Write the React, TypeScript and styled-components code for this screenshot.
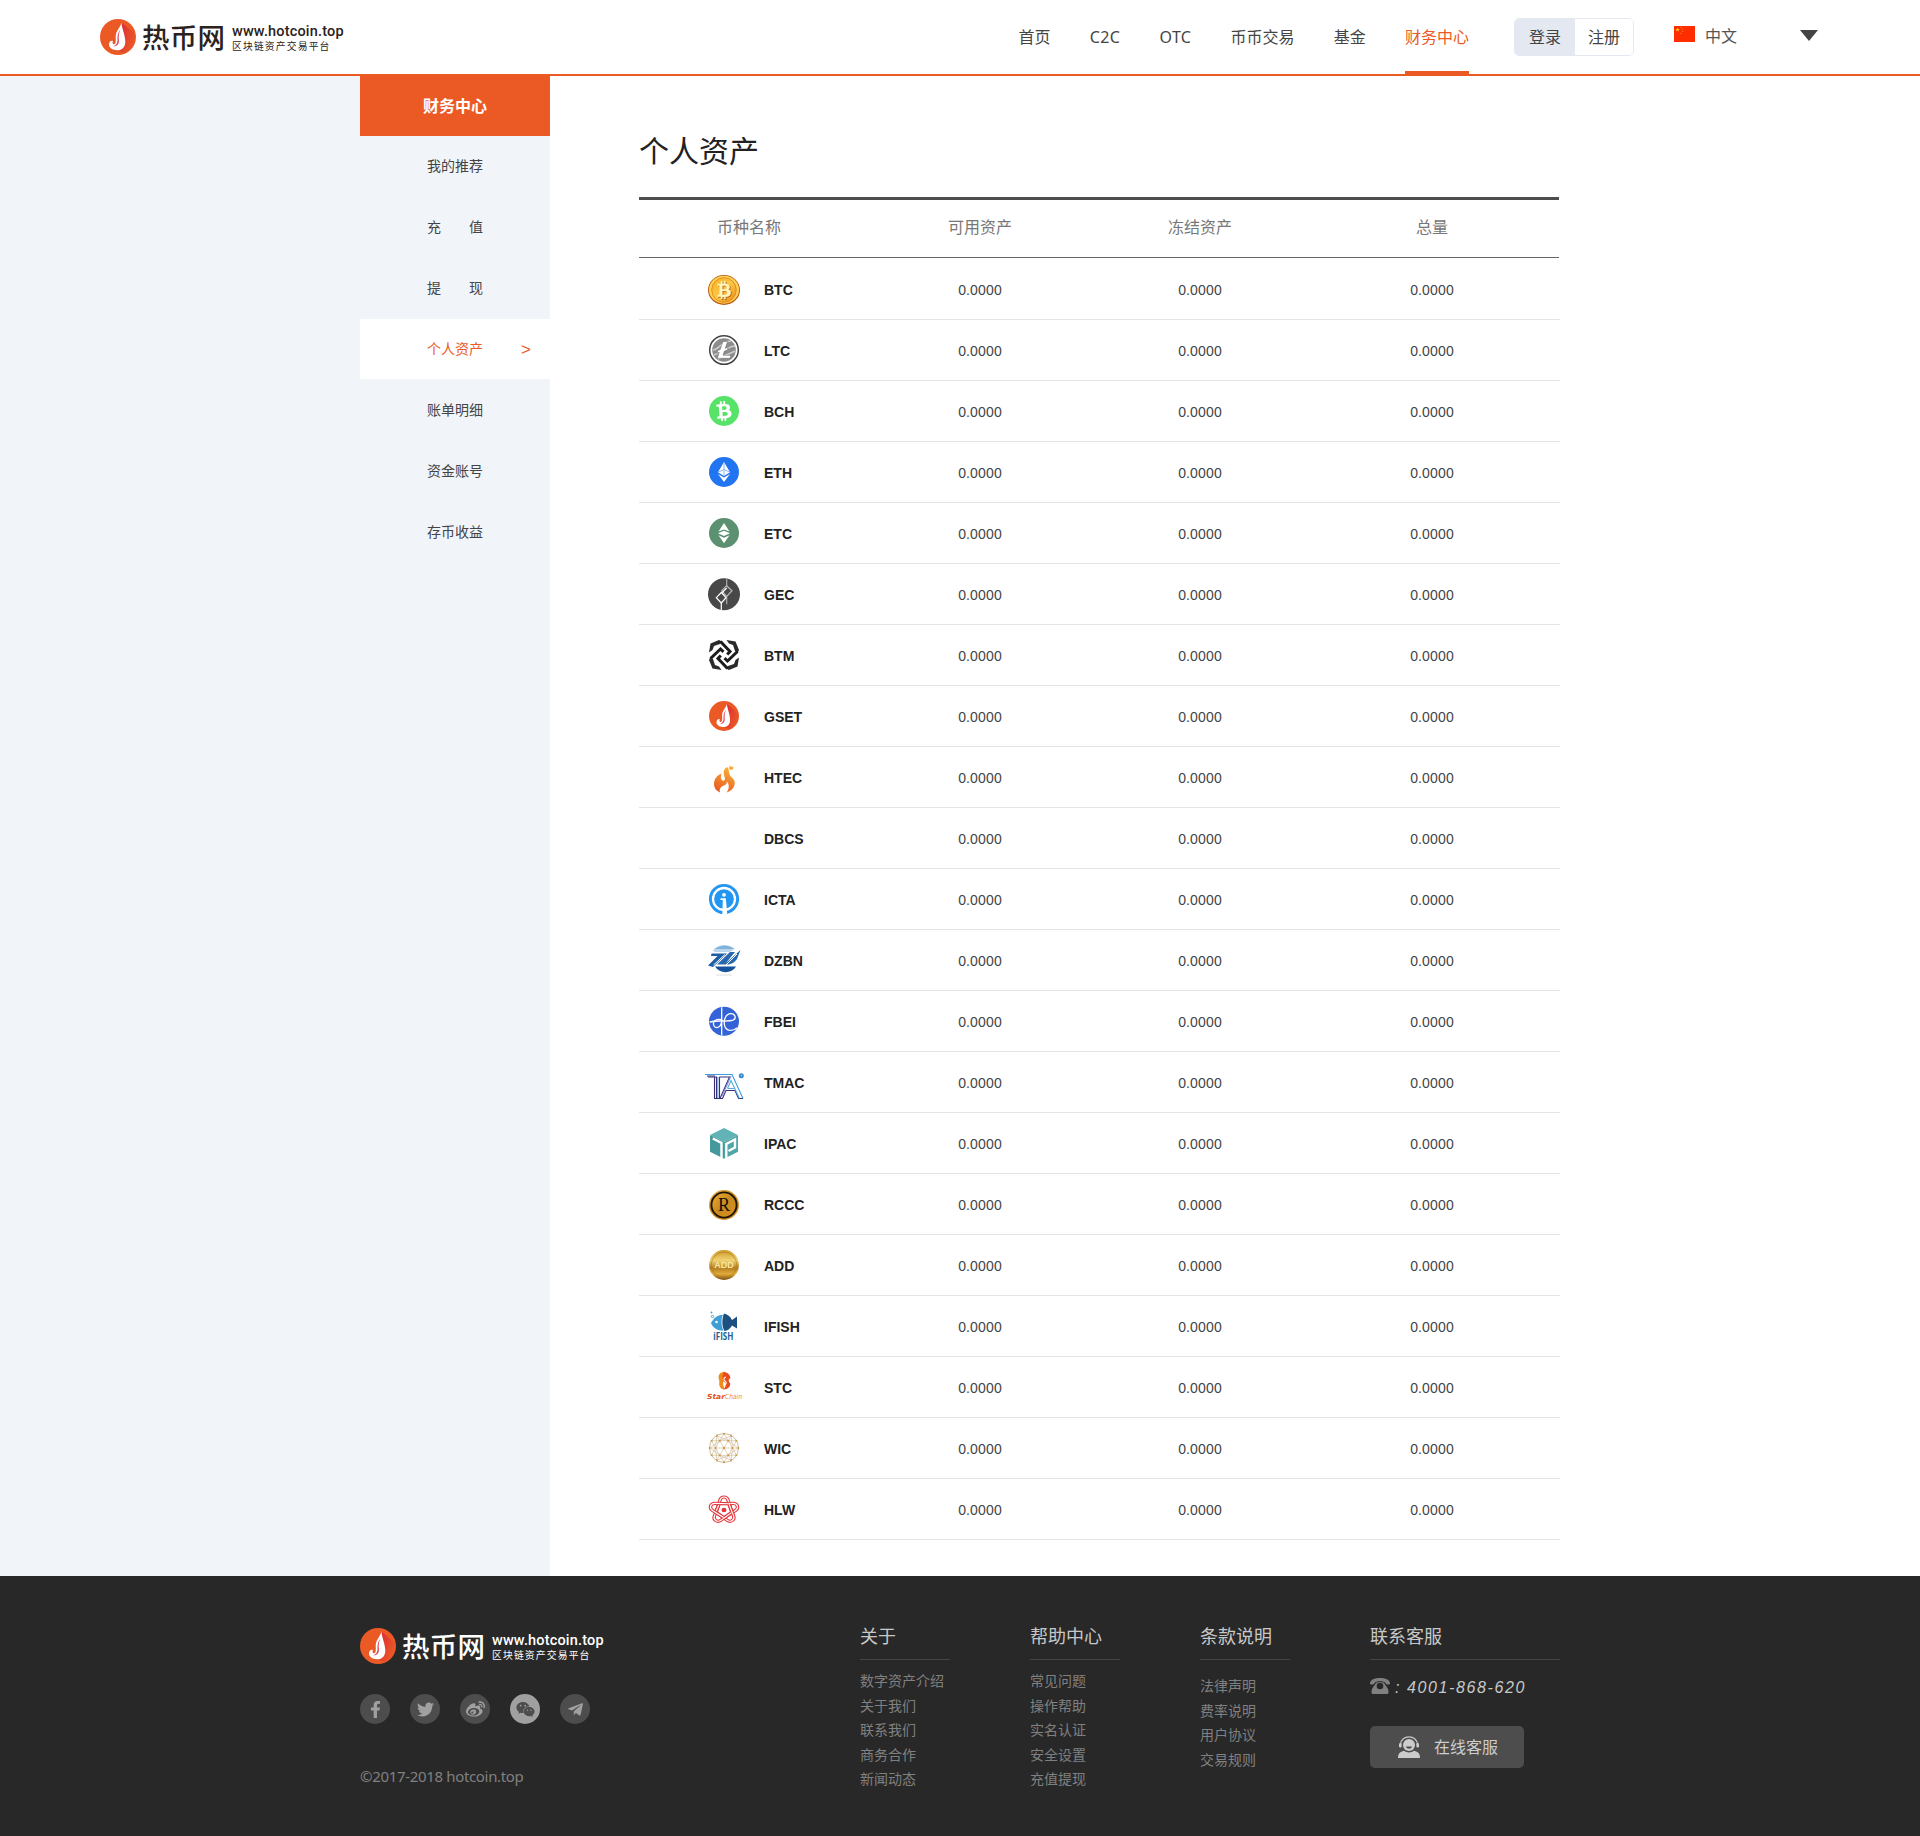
import React from 'react';
import styled, { createGlobalStyle } from 'styled-components';
import { FaBtc, FaFacebookF, FaTwitter, FaWeibo, FaWeixin, FaTelegramPlane } from 'react-icons/fa';

const cjk = '"Noto Sans", "Noto Sans CJK SC", sans-serif';
const arial = '"Liberation Sans", "Noto Sans CJK SC", sans-serif';
const orange = '#eb5a25';

const GlobalStyle = createGlobalStyle`
  * { box-sizing: border-box; }
  body { margin: 0; background: #fff; font-family: ${cjk}; color: #444; }
  ul { list-style: none; margin: 0; padding: 0; }
  a { color: inherit; text-decoration: none; }
  svg { display: block; flex: none; }
`;

const Page = styled.div`
  width: 1920px;
  height: 1836px;
  display: flex;
  flex-direction: column;
`;

/* ---------- header ---------- */

const Header = styled.header`
  height: 76px;
  flex: none;
  display: flex;
  align-items: center;
  padding: 0 102px 0 100px;
  border-bottom: 2px solid ${orange};
`;

const LogoBox = styled.a<{ $light?: boolean }>`
  display: flex;
  align-items: center;
  height: 36px;
  color: ${(p) => (p.$light ? '#fff' : '#2b2220')};
`;

const LogoName = styled.span`
  margin: -2px 0 0 6px;
  width: 84px;
  font: 500 27.5px/36px "Noto Sans CJK SC", sans-serif;
  letter-spacing: 0.3px;
  white-space: nowrap;
`;

const LogoSide = styled.span`
  display: flex;
  flex-direction: column;
  margin-left: 6px;
  padding-top: 3px;
`;

const LogoUrl = styled.span`
  font: 500 14.5px/15px Roboto, sans-serif;
  letter-spacing: 0.17px;
  white-space: nowrap;
`;

const LogoTag = styled.span`
  font: 400 9.8px/14px "Noto Sans CJK SC", sans-serif;
  letter-spacing: 1.15px;
  white-space: nowrap;
`;

const Nav = styled.nav`
  display: flex;
  gap: 39.2px;
  height: 74px;
  margin-left: auto;
`;

const NavLink = styled.a<{ $active?: boolean; $latin?: boolean }>`
  font-size: 16px;
  line-height: 74px;
  height: 74px;
  letter-spacing: ${(p) => (p.$latin ? '0.4px' : '0')};
  white-space: nowrap;
  color: ${(p) => (p.$active ? orange : '#444')};
  border-bottom: 3px solid ${(p) => (p.$active ? orange : 'transparent')};
`;

const AuthBox = styled.div`
  display: flex;
  width: 120px;
  height: 38px;
  margin-left: 45px;
  border: 1px solid #e4e9f1;
  border-radius: 5px;
  overflow: hidden;
`;

const AuthLink = styled.a<{ $filled?: boolean }>`
  width: ${(p) => (p.$filled ? '60px' : '58px')};
  text-align: center;
  font-size: 16px;
  line-height: 37px;
  background: ${(p) => (p.$filled ? '#e4e9f1' : '#fff')};
`;

const Language = styled.div`
  display: flex;
  align-items: center;
  margin-left: 40px;
  gap: 10px;
  font-size: 16px;
  line-height: 24px;
  color: #555;
`;

const Flag = styled.svg`
  margin-top: -6px;
`;

const LanguageName = styled.span`
  margin-top: -2px;
`;

const Caret = styled.span`
  width: 0;
  height: 0;
  margin: 0 0 3px 63px;
  border: 9px solid transparent;
  border-top: 11px solid #444;
  border-bottom: 0;
`;

/* ---------- body ---------- */

const Body = styled.div`
  height: 1500px;
  flex: none;
  display: flex;
`;

const Side = styled.aside`
  width: 550px;
  padding-left: 360px;
  background: #f1f5fa;
`;

const SideTitle = styled.h2`
  margin: 0;
  height: 60px;
  background: ${orange};
  color: #fff;
  text-align: center;
  font: 700 16px/61px ${cjk};
`;

const SideItem = styled.li<{ $active?: boolean }>`
  display: grid;
  grid-template-columns: 1fr auto 1fr;
  grid-template-rows: 60px;
  height: 60px;
  margin-bottom: 1px;
  font-size: 14px;
  line-height: 59px;
  white-space: pre;
  color: ${(p) => (p.$active ? orange : '#444')};
  background: ${(p) => (p.$active ? '#fff' : 'transparent')};
`;

const SideLabel = styled.a`
  grid-column: 2;
`;

const SideArrow = styled.span`
  justify-self: end;
  padding-right: 19px;
  font: 400 17px/61px ${arial};
`;

const Main = styled.main`
  padding: 49px 0 0 89px;
  width: 1010px;
`;

const Title = styled.h1`
  margin: 0;
  height: 72px;
  font: 400 30px/52px ${cjk};
  color: #222;
`;

const Columns = styled.div`
  display: grid;
  grid-template-columns: 220px 242px 198px 266px;
`;

const TableHead = styled(Columns)`
  width: 920px;
  height: 61px;
  border-top: 3px solid #4d4d4d;
  border-bottom: 1px solid #666;
  margin-bottom: 1px;
  font-size: 16px;
  line-height: 55px;
  text-align: center;
  color: #777;
`;

const Row = styled(Columns)`
  grid-template-rows: 60px;
  width: 921px;
  height: 61px;
  border-bottom: 1px solid #e4e4e4;
`;

const Coin = styled.div`
  display: flex;
  align-items: center;
  gap: 20px;
  padding-left: 65px;
`;

const CoinSlot = styled.svg`
  overflow: visible;
`;

const CoinName = styled.span`
  font: 700 14px/20px ${arial};
  padding-top: 2px;
  color: #222;
`;

const Amount = styled.span`
  font: 400 14px/62px ${arial};
  letter-spacing: 0.15px;
  text-align: center;
  color: #444;
`;

/* ---------- footer ---------- */

const Footer = styled.footer`
  height: 260px;
  flex: none;
  display: flex;
  padding: 0 360px;
  background: #282828;
  color: #808080;
`;

const Brand = styled.div`
  width: 500px;
  padding-top: 52px;
`;

const Socials = styled.div`
  display: flex;
  gap: 20px;
  margin-top: 30px;
`;

const Social = styled.a<{ $lit?: boolean }>`
  width: 30px;
  height: 30px;
  border-radius: 50%;
  display: flex;
  align-items: center;
  justify-content: center;
  font-size: 17px;
  background: ${(p) => (p.$lit ? '#a0a0a0' : '#4d4d4d')};
  color: ${(p) => (p.$lit ? '#4d4d4d' : '#a0a0a0')};
`;

const Copyright = styled.p`
  margin: 40px 0 0;
  font: 400 15px/24px ${cjk};
  letter-spacing: -0.33px;
`;

const LinkColumns = styled.div`
  display: flex;
  gap: 80px;
  padding-top: 46px;
`;

const LinkColumn = styled.section<{ $wide?: boolean }>`
  width: ${(p) => (p.$wide ? '190px' : '90px')};
`;

const ColumnTitle = styled.h3`
  margin: 0;
  height: 38px;
  border-bottom: 1px solid #444;
  font: 400 18px/28px ${cjk};
  color: #c8c8c8;
`;

const LinkList = styled.ul<{ $top: number }>`
  padding-top: ${(p) => p.$top}px;
  font-size: 14px;
  line-height: 24.5px;
  white-space: nowrap;
`;

const Phone = styled.div`
  display: flex;
  align-items: center;
  gap: 5px;
  margin-top: 14px;
  font: italic 400 16px/24px ${arial};
  letter-spacing: 1.6px;
  color: #c8c8c8;
  white-space: pre;
`;

const PhoneNumber = styled.span`
  padding-top: 2px;
  margin-bottom: -2px;
`;

const ServiceButton = styled.a`
  display: flex;
  align-items: center;
  gap: 14px;
  width: 154px;
  height: 42px;
  margin-top: 28px;
  padding-left: 28px;
  border-radius: 5px;
  background: #4d4d4d;
  color: #ccc;
  font-size: 16px;
  line-height: 40px;
`;

/* ---------- drawings ---------- */

const Flame = ({ id }: { id: string }) => (
  <g>
    <defs>
      <linearGradient id={id} x1="0" y1="0" x2="1" y2="0.6">
        <stop offset="0" stopColor="#d9203c" />
        <stop offset="1" stopColor="#eb5a25" />
      </linearGradient>
    </defs>
    <circle cx="18" cy="18" r="18" fill="#eb5a25" />
    <path d="M21.5 3.5 L35 15 A18 18 0 0 1 24 34 L17 31 L24 22Z" fill={`url(#${id})`} />
    <path
      d="M21.6 3.4C21.3 8.500 25.300 15.500 25.300 22.500C25.300 28.200 22 31.300 17.500 31.300C12 31.300 9 28.600 9 25.600C9 23 10.800 21.200 13 21.900C12.200 23.600 12.600 25.400 14 25.300C16 25.100 15.900 22 15.700 18C15.500 12 20 9 21.600 3.400Z"
      fill="#fff"
    />
    <path d="M20.800 10C18.400 14.500 18.600 17.500 18.900 21C19.200 25 17.200 27.600 13.300 27.300C16.500 26 17.700 24 17.500 20.500C17.200 16.500 18 13.500 20.800 10Z" fill="#e0405a" />
  </g>
);

const Logo = ({ light }: { light?: boolean }) => (
  <LogoBox $light={light}>
    <svg width="36" height="36" viewBox="0 0 36 36">
      <Flame id={light ? 'flame-footer' : 'flame-header'} />
    </svg>
    <LogoName>热币网</LogoName>
    <LogoSide>
      <LogoUrl>www.hotcoin.top</LogoUrl>
      <LogoTag>区块链资产交易平台</LogoTag>
    </LogoSide>
  </LogoBox>
);

const quarter = [0, 90, 180, 270];
const fifth = [0, 72, 144, 216, 288];

const wicPoints = (r: number, n: number, off = 0) =>
  Array.from({ length: n }, (_, i) => {
    const a = ((i + off) * 2 * Math.PI) / n;
    return [20 + r * Math.sin(a), 20 - r * Math.cos(a)];
  });
const wicOuter = wicPoints(14.3, 12);
const wicInner = wicPoints(8.5, 6, 0.5);

const art: Record<string, React.ReactNode> = {
  BTC: (
    <g transform="translate(0 1)">
      <defs>
        <linearGradient id="btc" x1="0" y1="0" x2="1" y2="1">
          <stop offset="0" stopColor="#f9b21f" />
          <stop offset="0.5" stopColor="#fbc64a" />
          <stop offset="1" stopColor="#e88a12" />
        </linearGradient>
      </defs>
      <ellipse cx="20" cy="20" rx="16" ry="15" fill="#b9590c" />
      <ellipse cx="20" cy="19.700" rx="15" ry="14" fill="#ffd257" />
      <circle cx="20" cy="20" r="12.300" fill="url(#btc)" stroke="#d98212" strokeWidth="0.8" />
      <g transform="translate(0.900 0.800)"><FaBtc x="10.800" y="10.800" size="18.500" color="#b9650e" /></g>
      <FaBtc x="10.800" y="10.800" size="18.500" color="#fff3b8" />
    </g>
  ),
  LTC: (
    <g>
      <circle cx="20" cy="20" r="14.300" fill="#fff" stroke="#444" strokeWidth="1.500" />
      <circle cx="20" cy="20" r="11.800" fill="#8c8c8c" />
      <path d="M9 20C15 20 16 12 27 11M10 25C16 23 22 17 31 16M14 29C20 25 26 24 31 21" fill="none" stroke="#ccc" strokeWidth="1.600" />
      <path d="M19 11.500h4.500l-2.300 7 3-1.200-.8 2.600-3 1.200-1.400 4.200h8l-1 3H13.300l2-6.100-2.300.9.800-2.600 2.400-1z" fill="#fff" stroke="#666" strokeWidth="0.5" />
    </g>
  ),
  BCH: (
    <g>
      <circle cx="20" cy="20" r="15" fill="#57e268" />
      <g transform="rotate(-4 20 20)"><FaBtc x="10" y="10" size="20" color="#fff" /></g>
    </g>
  ),
  ETH: (
    <g>
      <circle cx="20" cy="20" r="15" fill="#2275f0" />
      <path d="M20 10L26 20.300L20 24L14 20.300Z" fill="#fff" />
      <path d="M14 22L20 25.600L26 22L20 30Z" fill="#fff" />
      <path d="M20 10V24M14.500 20L20 17.500L25.500 20" stroke="#7fb0f8" strokeWidth="0.9" fill="none" />
    </g>
  ),
  ETC: (
    <g>
      <circle cx="20" cy="20" r="15" fill="#5b9070" />
      <path d="M20 10L25.500 18.500L20 16.500L14.500 18.500Z" fill="#fff" />
      <path d="M14 20.300L20 17.800L26 20.300L20 23Z" fill="#fff" />
      <path d="M14.500 22.300L20 24.700L25.500 22.300L20 30.300Z" fill="#fff" />
    </g>
  ),
  GEC: (
    <g fill="none" stroke="#e6e6e6" strokeWidth="1.200">
      <circle cx="20" cy="20.300" r="16" fill="#484848" stroke="none" />
      <path d="M22.700 4.500V11.700M22.700 22.300V30.300" stroke="#aaa" />
      <path d="M22.700 11.700L28 16.700L22.700 22.300L17.700 16.700Z" stroke="#bbb" />
      <path d="M17.300 18.500L22 23.700L17.300 29L12.300 23.700Z" stroke="#fff" />
      <path d="M17.300 29V36M17.700 19L22.700 14" stroke="#fff" />
    </g>
  ),
  BTM: (
    <g fill="none" stroke="#1c1c1c">
      {quarter.map((a) => (
        <g key={a} transform={`rotate(${a} 20 20)`}>
          <path d="M5 17.500L6.500 8.500L15 5L18 6.500L16 9L10 11L8.500 15Z" fill="#2a2a2a" stroke="none" />
          <path d="M6.500 23.500L16.500 14L19.500 16.800" strokeWidth="3" />
        </g>
      ))}
    </g>
  ),
  GSET: (
    <g transform="translate(5 5) scale(0.8333)">
      <Flame id="flame-gset" />
    </g>
  ),
  HTEC: (
    <g>
      <defs>
        <linearGradient id="htec" x1="0.700" y1="0" x2="0.300" y2="1">
          <stop offset="0" stopColor="#f9b13c" />
          <stop offset="1" stopColor="#e85a20" />
        </linearGradient>
      </defs>
      <path d="M23 10C17.500 13 20.500 18.500 21 21.500C21 24 18.500 24.500 17.500 22.500C16.500 20.500 17 18 17.500 16.500C13 18 10 22.500 10 27C10 31 12.500 34 16 35.500C15 31.500 17 29.500 20 28.500C22.500 27.500 23 26 22.800 24.500C25.500 27 25.500 32 22.500 35.500C28 34 31 29.500 30.800 25.500C30.500 21.500 26.500 20.500 25.500 17C24.500 14 25.500 12 23 10Z" fill="url(#htec)" />
      <path d="M26 8.500L27.500 10L29.500 9.500L29 12.300L26.500 13L25 11.500Z" fill="#f5a83c" />
    </g>
  ),
  DBCS: null,
  ICTA: (
    <g>
      <circle cx="20" cy="20" r="13.600" fill="none" stroke="#2196f3" strokeWidth="2.900" />
      <circle cx="20" cy="20" r="9.800" fill="#2196f3" />
      <circle cx="20" cy="15.800" r="1.900" fill="#fff" />
      <path d="M16.500 19.300H21.800L23.300 36H18.300L18.800 21H16.500Z" fill="#fff" />
    </g>
  ),
  DZBN: (
    <g>
      <path d="M9 10A15 14 0 0 1 31 9L33 7.500L26 12H10.500Z" fill="#b9d6ec" />
      <path d="M11 9A15 14 0 0 1 30 9Z" fill="#7fb2da" />
      <path d="M7.500 13.500H23L9 27L4 25.500L13.500 16H7Z" fill="#1d5fa8" />
      <path d="M26 12H31L21.500 23.500L36.500 10L33 19C31 22 28 24 24.500 24.500H13L26 12Z" fill="#2667ad" />
      <path d="M11 26.500H32C28 33.500 16 34.500 11 26.500Z" fill="#17529c" />
      <path d="M12 35H28" stroke="#ddd" />
      <path d="M9.500 25L21 14.500M22 25L33 14" stroke="#fff" strokeWidth="1" />
    </g>
  ),
  FBEI: (
    <g transform="translate(0 0.700)">
      <ellipse cx="20" cy="19.600" rx="15" ry="14.500" fill="#3463d8" />
      <g fill="none" stroke="#fff" strokeWidth="1.300">
        <path d="M17.700 5.500V33.500" />
        <path d="M5.500 20.500C12 18 24 20.500 29 18.500C33 16.500 31 12 27 12C21 12 19 20 21 25C23 29.500 29 30 33 26" />
        <path d="M17.700 18C12 16.500 8 20 10 24C12 27.500 17.700 26 17.700 18" />
      </g>
    </g>
  ),
  TMAC: (
    <g fill="none" strokeWidth="1.100">
      <path d="M1 12.500H28L39 36.500" stroke="#3b9fe0" />
      <path d="M4 15H12.500V36.500M15.500 15V36.500H12" stroke="#3a2f78" />
      <path d="M3 14H11M10.500 15V36.500H12M15.500 15H25.500L16 36.500H18.500L22 28.500H31L34.500 36.500H39" stroke="#3a2f78" />
      <path d="M23.500 26.500L27 18.500L35.500 36.500M13.800 15V36M24 26.500H30" stroke="#55a9dd" />
      <path d="M18 34L27 14" stroke="#7a8fd0" />
      <circle cx="37.300" cy="13.700" r="2.500" fill="#2f86c8" stroke="none" />
      <path d="M36.300 13.300H38.300M37.300 12.500V15" stroke="#bfe0f5" strokeWidth="0.5" />
    </g>
  ),
  IPAC: (
    <g>
      <path d="M20 5L34 12L20 19L6 12Z" fill="#62b3b5" />
      <path d="M6 12L20 19V35.700L6 28.700Z" fill="#45989c" />
      <path d="M34 12L20 19V35.700L34 28.700Z" fill="#4fa5a8" />
      <path d="M8.800 15.500L17.500 20V35M22.300 35.500V21L31 16.500V24.500L24.500 28" fill="none" stroke="#fff" strokeWidth="2.400" />
    </g>
  ),
  RCCC: (
    <g>
      <defs>
        <linearGradient id="rccc" x1="0" y1="0" x2="1" y2="1">
          <stop offset="0" stopColor="#f0b33a" />
          <stop offset="0.5" stopColor="#c98a1e" />
          <stop offset="1" stopColor="#d9921f" />
        </linearGradient>
      </defs>
      <circle cx="20" cy="21" r="15" fill="url(#rccc)" />
      <circle cx="20" cy="21" r="12.600" fill="none" stroke="#1d1408" strokeWidth="1.900" />
      <text x="20" y="27" textAnchor="middle" fontFamily="Liberation Serif, serif" fontSize="18" fill="#140d04">R</text>
    </g>
  ),
  ADD: (
    <g>
      <defs>
        <linearGradient id="add" x1="0" y1="0" x2="0" y2="1">
          <stop offset="0" stopColor="#cf9a26" />
          <stop offset="0.35" stopColor="#f0d273" />
          <stop offset="0.6" stopColor="#b57f22" />
          <stop offset="0.8" stopColor="#e2ab3a" />
          <stop offset="1" stopColor="#7e4b10" />
        </linearGradient>
      </defs>
      <circle cx="20" cy="20" r="15" fill="url(#add)" />
      <circle cx="20" cy="20" r="12.800" fill="none" stroke="#a87820" strokeWidth="0.600" />
      <text x="20" y="22.500" textAnchor="middle" fontFamily="Liberation Sans, sans-serif" fontWeight="700" fontSize="9" fill="#f8e7a4">ADD</text>
    </g>
  ),
  IFISH: (
    <g>
      <path d="M7 17C10 11 15 8.500 19 9C17 12 17 20 19.500 24.500C14 25 9 22 7 17Z" fill="#3d9fd6" />
      <path d="M20 7.500C23 8 26 10 28 14L33 10.500V22.500L28 19.500C26 23 23.500 24.500 20.500 25C17.500 20 18 12 20 7.500Z" fill="#1c5080" />
      <circle cx="12.500" cy="16" r="1.300" fill="#fff" />
      <circle cx="8.500" cy="10.500" r="1.200" fill="none" stroke="#3d9fd6" strokeWidth="0.900" />
      <circle cx="7.500" cy="6.500" r="0.900" fill="#3d9fd6" />
      <text x="9.300" y="34" fontFamily="Open Sans, sans-serif" fontWeight="700" fontSize="10" textLength="20" lengthAdjust="spacingAndGlyphs" fill="#1c6191">iFISH</text>
    </g>
  ),
  STC: (
    <g>
      <path d="M21 4.800C16 4.500 13.500 8.500 15 12.500C16 15.500 14.500 17 16 20C17.500 22.500 20 22.500 20 22.500C20.500 20 19 18 19 15.500L21 13C18.500 11.500 19.500 8 21 4.800Z" fill="#f08a18" />
      <path d="M20 5C24 5.500 26 8 26.500 11C24.500 12.500 24 13.500 26 16C27 19.500 24 22.500 19.500 22.500C22 19.500 22.500 17 20.500 15C18.500 13 17.500 9 20 5Z" fill="#e84a1a" />
      <path d="M22 10C18.500 11 20 13.500 21.500 14.500C23 16 22 17.500 19.500 18.500" fill="none" stroke="#fff" strokeWidth="1.100" />
      <text x="3" y="32.300" fontFamily="DejaVu Sans, sans-serif" fontStyle="italic" fontWeight="700" fontSize="7" textLength="18" lengthAdjust="spacingAndGlyphs" fill="#e2501c">Star</text>
      <text x="21" y="32.300" fontFamily="DejaVu Sans, sans-serif" fontStyle="italic" fontSize="7" textLength="17" lengthAdjust="spacingAndGlyphs" fill="#ec8a35">Chain</text>
    </g>
  ),
  WIC: (
    <g fill="none" stroke="#c2a97f" strokeWidth="0.500">
      <circle cx="20" cy="20" r="14.500" strokeWidth="0.800" />
      {wicOuter.map(([x, y], i) => (
        <g key={i}>
          {wicInner.map(([u, v], j) => (Math.hypot(x - u, y - v) < 13 ? <path key={j} d={`M${x} ${y}L${u} ${v}`} /> : null))}
          <circle cx={x} cy={y} r="1" fill="#cb9a4c" stroke="none" />
        </g>
      ))}
      {wicInner.map(([x, y], i) => (
        <g key={i}>
          <path d={`M20 20L${x} ${y}L${wicInner[(i + 1) % 6][0]} ${wicInner[(i + 1) % 6][1]}`} />
          <circle cx={x} cy={y} r="1" fill="#cb9a4c" stroke="none" />
        </g>
      ))}
      <circle cx="20" cy="20" r="1.200" fill="#cb9a4c" stroke="none" />
    </g>
  ),
  HLW: (
    <g fill="none" transform="translate(20 20.500) scale(1.08 1) translate(-20 -20)">
      {fifth.map((a) => (
        <g key={a} transform={`rotate(${a} 20 20.500)`}>
          <path d="M12.800 22.500L16.300 10.500C17.500 6.500 22.500 6.500 23.700 10.500L27.200 22.500" stroke="#e5383e" strokeWidth="3.200" />
          <path d="M12.800 22.500L16.300 10.500C17.500 6.500 22.500 6.500 23.700 10.500L27.200 22.500" stroke="#fff" strokeWidth="1.100" />
        </g>
      ))}
      <circle cx="20" cy="20.500" r="2.300" fill="#e5383e" />
    </g>
  ),
};

const coins = Object.keys(art);

const navItems = ['首页', 'C2C', 'OTC', '币币交易', '基金', '财务中心'];
const sideItems = ['我的推荐', '充　　值', '提　　现', '个人资产', '账单明细', '资金账号', '存币收益'];
const linkGroups = [
  { title: '关于', top: 9, links: ['数字资产介绍', '关于我们', '联系我们', '商务合作', '新闻动态'] },
  { title: '帮助中心', top: 9, links: ['常见问题', '操作帮助', '实名认证', '安全设置', '充值提现'] },
  { title: '条款说明', top: 14, links: ['法律声明', '费率说明', '用户协议', '交易规则'] },
];

export default function App() {
  return (
    <Page>
      <GlobalStyle />
      <Header>
        <Logo />
        <Nav>
          {navItems.map((t) => (
            <NavLink key={t} $active={t === '财务中心'} $latin={/^[A-Z]/.test(t)}>{t}</NavLink>
          ))}
        </Nav>
        <AuthBox>
          <AuthLink $filled>登录</AuthLink>
          <AuthLink>注册</AuthLink>
        </AuthBox>
        <Language>
          <Flag width="21" height="16" viewBox="0 0 21 16">
            <rect width="21" height="16" fill="#ff2d00" />
            <path d="M3.500 1.500L4.100 3L5.600 3L4.400 4L4.900 5.500L3.500 4.600L2.100 5.500L2.600 4L1.400 3L2.900 3Z" fill="#ffd400" />
            <path d="M6.500 1h1v1h-1zM8.200 2.800h1v1h-1zM8.200 5h1v1h-1zM6.200 7h1v1h-1z" fill="#e8941a" />
          </Flag>
          <LanguageName>中文</LanguageName>
        </Language>
        <Caret />
      </Header>

      <Body>
        <Side>
          <SideTitle>财务中心</SideTitle>
          <ul>
            {sideItems.map((t) => (
              <SideItem key={t} $active={t === '个人资产'}>
                <SideLabel>{t}</SideLabel>
                {t === '个人资产' && <SideArrow>&gt;</SideArrow>}
              </SideItem>
            ))}
          </ul>
        </Side>
        <Main>
          <Title>个人资产</Title>
          <TableHead>
            <span>币种名称</span>
            <span>可用资产</span>
            <span>冻结资产</span>
            <span>总量</span>
          </TableHead>
          {coins.map((name) => (
            <Row key={name}>
              <Coin>
                <CoinSlot width="40" height="40" viewBox="0 0 40 40">{art[name]}</CoinSlot>
                <CoinName>{name}</CoinName>
              </Coin>
              <Amount>0.0000</Amount>
              <Amount>0.0000</Amount>
              <Amount>0.0000</Amount>
            </Row>
          ))}
        </Main>
      </Body>

      <Footer>
        <Brand>
          <Logo light />
          <Socials>
            <Social><FaFacebookF /></Social>
            <Social><FaTwitter /></Social>
            <Social><FaWeibo size={19} /></Social>
            <Social $lit><FaWeixin size={19} /></Social>
            <Social><FaTelegramPlane /></Social>
          </Socials>
          <Copyright>©2017-2018 hotcoin.top</Copyright>
        </Brand>
        <LinkColumns>
          {linkGroups.map((g) => (
            <LinkColumn key={g.title}>
              <ColumnTitle>{g.title}</ColumnTitle>
              <LinkList $top={g.top}>
                {g.links.map((l) => (
                  <li key={l}><a>{l}</a></li>
                ))}
              </LinkList>
            </LinkColumn>
          ))}
          <LinkColumn $wide>
            <ColumnTitle>联系客服</ColumnTitle>
            <Phone>
              <svg width="20" height="16" viewBox="0 0 20 16" fill="#808080">
                <path d="M0 5.500C0 1.500 5 0 10 0S20 1.500 20 5.500C20 7 16 7 15.500 5C14.500 2.700 5.500 2.700 4.500 5C4 7 0 7 0 5.500Z" />
                <path d="M6 4.800Q10 3.300 14 4.800C15 7.500 18 9.500 18.500 13C18.700 15 18.300 16 17 16H3C1.700 16 1.300 15 1.500 13C2 9.500 5 7.500 6 4.800Z" />
                <circle cx="10" cy="8" r="3.300" fill="#282828" />
              </svg>
              <PhoneNumber>: 4001-868-620</PhoneNumber>
            </Phone>
            <ServiceButton>
              <svg width="22" height="22" viewBox="0 0 22 22">
                <path d="M0 22C0 17.500 2 15.800 6 14.800C9 17 13 17 16 14.800C20 15.800 22 17.500 22 22Z" fill="#ccc" />
                <circle cx="11" cy="9" r="6" fill="#ccc" />
                <path d="M2.500 8.500C3 -1.800 19 -1.800 19.500 8.500" fill="none" stroke="#ccc" strokeWidth="1.200" />
                <rect x="1" y="7" width="2.600" height="4.500" rx="1.200" fill="#ccc" />
                <rect x="18.400" y="7" width="2.600" height="4.500" rx="1.200" fill="#ccc" />
                <path d="M8 10.500H14C13.500 13.500 8.500 13.500 8 10.500Z" fill="#4d4d4d" />
              </svg>
              <span>在线客服</span>
            </ServiceButton>
          </LinkColumn>
        </LinkColumns>
      </Footer>
    </Page>
  );
}
